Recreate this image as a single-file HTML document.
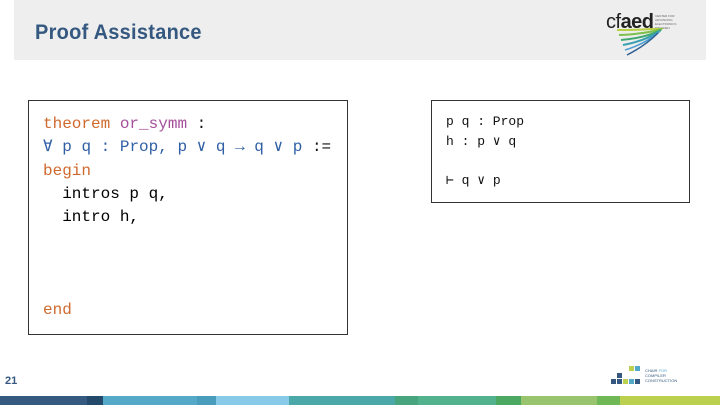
<!DOCTYPE html>
<html><head><meta charset="utf-8"><style>
body{margin:0;width:720px;height:405px;position:relative;background:#fff;overflow:hidden;font-family:"Liberation Sans",sans-serif}
.hdr{position:absolute;left:14px;top:0;width:692px;height:60px;background:#eeeeee}
.title{position:absolute;left:35px;top:21px;font-size:21px;font-weight:bold;color:#34587f;letter-spacing:0.3px;transform:scaleX(0.95);transform-origin:left}
.box{position:absolute;border:1px solid #333;background:#fff;font-family:"Liberation Mono","DejaVu Sans Mono",monospace;white-space:pre}
.code{left:28px;top:100px;width:318px;height:233px;font-size:16px;line-height:23.3px;padding:0}
.code .t{position:absolute;left:14px;top:12px}
.o{color:#d0692e}.p{color:#a4509a}.b{color:#2f5fa5}.k{color:#111}
.goal{left:431px;top:100px;width:257px;height:101px;font-size:13px;line-height:19.5px;color:#111}
.goal .t{position:absolute;left:14px;top:11px}
.num{position:absolute;left:5px;top:375px;font-size:11px;font-weight:bold;color:#34587f}
.bar{position:absolute;left:0;top:396px;width:720px;height:9px;background:linear-gradient(90deg,#355a80 0 87px,#234a6a 87px 103px,#55a9c8 103px 197px,#4a9cbd 197px 216px,#88cbe8 216px 289px,#4aa8a8 289px 395px,#48a47c 395px 418px,#52b28e 418px 496px,#4aa860 496px 521px,#98c46e 521px 597px,#70b855 597px 620px,#bcd050 620px 720px)}
.sq{position:absolute;width:5px;height:5px}
</style></head><body>
<div class="hdr"></div>
<div class="title">Proof Assistance</div>
<div style="position:absolute;left:606px;top:11px;font-size:20px;color:#222;letter-spacing:-0.5px"><span style="font-weight:300">c</span><span>f</span><b>aed</b></div>
<div style="position:absolute;left:655px;top:14px;font-size:3px;line-height:4px;color:#666">CENTER FOR<br>ADVANCING<br>ELECTRONICS<br>DRESDEN</div>
<svg style="position:absolute;left:615px;top:28px" width="50" height="28" viewBox="0 0 50 28">
<path d="M2 2 Q30 2 48 0" stroke="#b8d040" stroke-width="2" fill="none"/>
<path d="M4 7 Q30 6 47 1" stroke="#7cbf4a" stroke-width="2" fill="none"/>
<path d="M6 12 Q30 10 46 2" stroke="#3ea870" stroke-width="2" fill="none"/>
<path d="M8 17 Q30 13 45 3" stroke="#3aa0b0" stroke-width="2" fill="none"/>
<path d="M10 22 Q30 16 44 4" stroke="#4a9cd0" stroke-width="1.5" fill="none"/>
<path d="M12 27 Q30 18 43 5" stroke="#2f5f90" stroke-width="1.5" fill="none"/>
</svg>
<div class="box code"><div class="t"><span class="o">theorem</span> <span class="p">or_symm</span> <span class="k">:</span>
<span class="b">∀ p q : Prop, p ∨ q → q ∨ p</span> <span class="k">:=</span>
<span class="o">begin</span>
  intros p q,
  intro h,



<span class="o">end</span></div></div>
<div class="box goal"><div class="t">p q : Prop
h : p ∨ q

⊢ q ∨ p</div></div>
<div class="num">21</div>
<div class="sq" style="left:617px;top:373px;background:#34587f"></div>
<div class="sq" style="left:629px;top:366px;background:#bcd050"></div>
<div class="sq" style="left:635px;top:366px;background:#55a9c8"></div>
<div class="sq" style="left:611px;top:379px;background:#34587f"></div>
<div class="sq" style="left:617px;top:379px;background:#34587f"></div>
<div class="sq" style="left:623px;top:379px;background:#bcd050"></div>
<div class="sq" style="left:629px;top:379px;background:#55a9c8"></div>
<div class="sq" style="left:635px;top:379px;background:#34587f"></div>
<div style="position:absolute;left:645px;top:368px;font-size:4px;line-height:5px;color:#34587f">CHAIR <span style="color:#55a9c8">FOR</span><br>COMPILER<br>CONSTRUCTION</div>
<div class="bar"></div>
</body></html>
